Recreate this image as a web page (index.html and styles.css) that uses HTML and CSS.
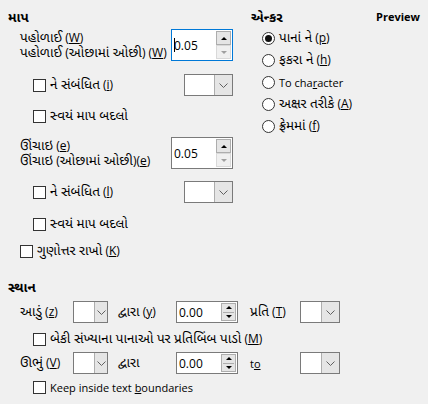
FILE: index.html
```html
<!DOCTYPE html>
<html>
<head>
<meta charset="utf-8">
<link rel="stylesheet" href="styles.css">
</head>
<body>
<div class="dlg">
  <div class="top">
    <div class="size">
      <div class="title"><span class="g">માપ</span></div>
      <div class="row r-a">
        <div class="lbl2"><span class="g">પહોળાઈ</span> (<u>W</u>)<br><span class="g">પહોળાઈ</span> (<span class="g">ઓછામાં ઓછી</span>) (<u>W</u>)</div>
        <div class="spin big focus">
          <span class="val"><span class="caret"></span>0.05</span>
          <span class="btns"><span class="sb up"><i class="tri-up"></i></span><span class="sb down dis"><i class="tri-down"></i></span></span>
        </div>
      </div>
      <div class="row r-b">
        <label class="chk ind"><span class="box"></span><span class="t"><span class="g">ને સંબંધિત</span> (<u>i</u>)</span></label>
        <div class="combo wide"><span class="field"></span><span class="dd"><svg width="9" height="5" viewBox="0 0 9 5"><path d="M0.5 0.5 L4.5 4.5 L8.5 0.5" fill="none" stroke="#606060" stroke-width="1"/></svg></span></div>
      </div>
      <div class="row r-c">
        <label class="chk ind"><span class="box"></span><span class="t"><span class="g">સ્વયં માપ બદલો</span></span></label>
      </div>
      <div class="row r-d">
        <div class="lbl2"><span class="g">ઊંચાઇ</span> (<u>e</u>)<br><span class="g">ઊંચાઇ</span> (<span class="g">ઓછામાં ઓછી</span>)(<u>e</u>)</div>
        <div class="spin big">
          <span class="val">0.05</span>
          <span class="btns"><span class="sb up"><i class="tri-up"></i></span><span class="sb down dis"><i class="tri-down"></i></span></span>
        </div>
      </div>
      <div class="row r-e">
        <label class="chk ind"><span class="box"></span><span class="t"><span class="g">ને સંબંધિત</span> (<u>l</u>)</span></label>
        <div class="combo wide"><span class="field"></span><span class="dd"><svg width="9" height="5" viewBox="0 0 9 5"><path d="M0.5 0.5 L4.5 4.5 L8.5 0.5" fill="none" stroke="#606060" stroke-width="1"/></svg></span></div>
      </div>
      <div class="row r-f">
        <label class="chk ind"><span class="box"></span><span class="t"><span class="g">સ્વયં માપ બદલો</span></span></label>
      </div>
      <div class="row r-g">
        <label class="chk"><span class="box"></span><span class="t"><span class="g">ગુણોત્તર રાખો</span> (<u>K</u>)</span></label>
      </div>
    </div>
    <div class="anchor">
      <div class="ahead"><span class="title"><span class="g">એન્કર</span></span><span class="title lat">Preview</span></div>
      <div class="radios">
        <label class="rad"><span class="circ on"></span><span class="t"><span class="g">પાનાં ને</span> (<u>p</u>)</span></label>
        <label class="rad"><span class="circ"></span><span class="t"><span class="g">ફકરા ને</span> (<u>h</u>)</span></label>
        <label class="rad"><span class="circ"></span><span class="t lat">To cha<u>r</u>acter</span></label>
        <label class="rad"><span class="circ"></span><span class="t"><span class="g">અક્ષર તરીકે</span> (<u>A</u>)</span></label>
        <label class="rad"><span class="circ"></span><span class="t"><span class="g">ફ્રેમમાં</span> (<u>f</u>)</span></label>
      </div>
    </div>
  </div>
  <div class="pos">
    <div class="title"><span class="g">સ્થાન</span></div>
    <div class="prow r-h">
      <span class="plbl"><span class="g">આડું</span> (<u>z</u>)</span>
      <div class="combo small"><span class="field"></span><span class="dd"><svg width="9" height="5" viewBox="0 0 9 5"><path d="M0.5 0.5 L4.5 4.5 L8.5 0.5" fill="none" stroke="#606060" stroke-width="1"/></svg></span></div>
      <span class="plbl2"><span class="g">દ્વારા</span> (<u>y</u>)</span>
      <div class="spin sm">
        <span class="val">0.00</span>
        <span class="btns2"><span class="sb2"><i class="tri-up"></i></span><span class="sep"></span><span class="sb2"><i class="tri-down"></i></span></span>
      </div>
      <span class="plbl3"><span class="g">પ્રતિ</span> (<u>T</u>)</span>
      <div class="combo small2"><span class="field"></span><span class="dd"><svg width="9" height="5" viewBox="0 0 9 5"><path d="M0.5 0.5 L4.5 4.5 L8.5 0.5" fill="none" stroke="#606060" stroke-width="1"/></svg></span></div>
    </div>
    <div class="prow r-i">
      <label class="chk ind"><span class="box"></span><span class="t"><span class="g">બેકી સંખ્યાના પાનાઓ પર પ્રતિબિંબ પાડો</span> (<u>M</u>)</span></label>
    </div>
    <div class="prow r-j">
      <span class="plbl"><span class="g">ઊભું</span> (<u>V</u>)</span>
      <div class="combo small"><span class="field"></span><span class="dd"><svg width="9" height="5" viewBox="0 0 9 5"><path d="M0.5 0.5 L4.5 4.5 L8.5 0.5" fill="none" stroke="#606060" stroke-width="1"/></svg></span></div>
      <span class="plbl2"><span class="g">દ્વારા</span></span>
      <div class="spin sm">
        <span class="val">0.00</span>
        <span class="btns2"><span class="sb2"><i class="tri-up"></i></span><span class="sep"></span><span class="sb2"><i class="tri-down"></i></span></span>
      </div>
      <span class="plbl3 lat">t<u>o</u></span>
      <div class="combo small2"><span class="field"></span><span class="dd"><svg width="9" height="5" viewBox="0 0 9 5"><path d="M0.5 0.5 L4.5 4.5 L8.5 0.5" fill="none" stroke="#606060" stroke-width="1"/></svg></span></div>
    </div>
    <div class="prow r-k">
      <label class="chk ind"><span class="box"></span><span class="t lat">Keep inside text <u>b</u>oundaries</span></label>
    </div>
  </div>
</div>
</body>
</html>
```

FILE: styles.css
```css
html, body {
  margin: 0;
  padding: 0;
  background: #f0f0f0;
}
body {
  width: 428px;
  height: 404px;
  overflow: hidden;
  font-family: "Open Sans", "Noto Sans", "Noto Sans Gujarati", "Lohit Gujarati", sans-serif;
  font-size: 12px;
  color: #000;
}
.g { font-size: 13.5px; }
.lat { font-size: 11px; }
u { text-decoration: underline; text-underline-offset: 1px; }
.dlg { padding: 9px 8px 0 8px; }
.top { display: flex; }
.size { width: 225px; }
.title {
  font-weight: bold;
  line-height: 16px;
  height: 16px;
  white-space: nowrap;
}
.row {
  display: flex;
  align-items: center;
  padding-left: 12px;
}
.row > :first-child { flex: 0 0 151px; }
.r-a { height: 32px; margin-top: 4px; }
.r-b { height: 22px; margin-top: 13px; }
.r-c { height: 22px; margin-top: 9px; }
.r-d { height: 32px; margin-top: 10px; }
.r-e { height: 22px; margin-top: 12px; }
.r-f { height: 22px; margin-top: 10px; }
.r-g { height: 22px; margin-top: 5px; }
.lbl2 { line-height: 14px; white-space: nowrap; }

.chk { display: flex; align-items: center; white-space: nowrap; }
.chk.ind { padding-left: 13px; }
.box {
  width: 11px; height: 11px;
  border: 1px solid #333;
  background: #fff;
  margin-right: 4px;
  flex: none;
}

.spin {
  display: flex;
  box-sizing: border-box;
  background: #fff;
  border: 1px solid #7a7a7a;
}
.spin.big { width: 62px; height: 32px; }
.spin.focus { border-color: #0078d7; }
.spin .val {
  flex: 1;
  display: flex;
  align-items: center;
  padding-left: 2px;
  font-size: 12px;
  position: relative;
}
.caret {
  position: absolute;
  left: 2px; top: 8px;
  width: 1px; height: 14px;
  background: #000;
}
.btns { display: flex; flex-direction: column; width: 15px; padding: 1px 1px 1px 0; }
.sb {
  flex: 1;
  box-sizing: border-box;
  display: flex; align-items: center; justify-content: center;
}
.sb.up { background: #e5e5e5; border: 1px solid #adadad; }
.sb.down { background: #f0f0f0; border: 1px solid #d9d9d9; }
.tri-up { width: 0; height: 0; border-left: 3px solid transparent; border-right: 3px solid transparent; border-bottom: 3px solid #000; }
.tri-down { width: 0; height: 0; border-left: 3px solid transparent; border-right: 3px solid transparent; border-top: 3px solid #000; }
.sb.dis .tri-down { border-top-color: #a0a0a0; }

.combo {
  display: flex;
  box-sizing: border-box;
  height: 22px;
  border: 1px solid #7a7a7a;
  background: #fff;
}
.combo .field { flex: 1; }
.combo .dd {
  width: 17px;
  background: #e5e5e5;
  border-left: 1px solid #adadad;
  display: flex; align-items: center; justify-content: center;
}
.combo.wide { width: 62px; }
.combo.small { width: 35px; }
.combo.small2 { width: 40px; }
.combo.small .dd { width: 12px; }
.combo.small2 .dd { width: 17px; }

.anchor { margin-left: 18px; width: 169px; }
.ahead { display: flex; justify-content: space-between; }
.radios { margin-top: 2px; padding-left: 11px; }
.rad { display: flex; align-items: center; height: 22px; white-space: nowrap; }
.circ {
  width: 11px; height: 11px;
  border: 1px solid #333;
  border-radius: 50%;
  background: #fff;
  margin-right: 4px;
  flex: none;
  display: flex; align-items: center; justify-content: center;
}
.circ.on::after {
  content: "";
  width: 7px; height: 7px; border-radius: 50%;
  background: #111;
}

.pos { margin-top: 17px; }
.prow { display: flex; align-items: center; padding-left: 12px; white-space: nowrap; }
.r-h { height: 22px; margin-top: 6px; }
.r-i { height: 18px; margin-top: 7px; }
.r-j { height: 22px; margin-top: 4px; }
.r-k { height: 18px; margin-top: 4px; }
.plbl { width: 53px; }
.plbl2 { width: 58px; margin-left: 10px; }
.plbl3 { width: 50px; margin-left: 12px; }
.spin.sm { width: 62px; height: 22px; }
.btns2 {
  width: 15px;
  margin: 1px 1px 1px 0;
  box-sizing: border-box;
  border: 1px solid #adadad;
  background: #e5e5e5;
  display: flex; flex-direction: column;
}
.sb2 { flex: 1; display: flex; align-items: center; justify-content: center; }
.sep { height: 1px; background: #adadad; margin: 0 1px; }
```
